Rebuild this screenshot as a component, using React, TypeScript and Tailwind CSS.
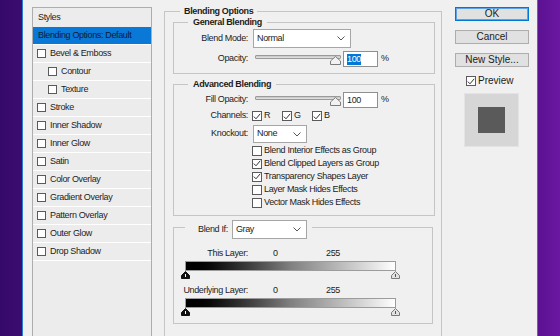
import type { ReactNode } from "react";

const styleItems = [
  { label: "Bevel & Emboss", sub: false },
  { label: "Contour", sub: true },
  { label: "Texture", sub: true },
  { label: "Stroke", sub: false },
  { label: "Inner Shadow", sub: false },
  { label: "Inner Glow", sub: false },
  { label: "Satin", sub: false },
  { label: "Color Overlay", sub: false },
  { label: "Gradient Overlay", sub: false },
  { label: "Pattern Overlay", sub: false },
  { label: "Outer Glow", sub: false },
  { label: "Drop Shadow", sub: false },
];

const advancedChecks = [
  { label: "Blend Interior Effects as Group", checked: false },
  { label: "Blend Clipped Layers as Group", checked: true },
  { label: "Transparency Shapes Layer", checked: true },
  { label: "Layer Mask Hides Effects", checked: false },
  { label: "Vector Mask Hides Effects", checked: false },
];

function CheckBox({ checked = false, size = "w-[10px] h-[10px]" }: { checked?: boolean; size?: string }) {
  return (
    <div className={`flex shrink-0 items-center justify-center border border-[#5a5a5a] bg-white ${size}`}>
      {checked && (
        <svg width="8" height="7" viewBox="0 0 8 7">
          <polyline points="0.8,3.6 3,5.8 7.2,0.8" fill="none" stroke="#333" strokeWidth="1" />
        </svg>
      )}
    </div>
  );
}

function Chevron() {
  return (
    <svg width="8" height="5" viewBox="0 0 8 5">
      <polyline points="0.5,0.5 4,4 7.5,0.5" fill="none" stroke="#555" strokeWidth="1" />
    </svg>
  );
}

function Select({ value, width, height = "h-[19px]" }: { value: string; width: string; height?: string }) {
  return (
    <div className={`flex items-center justify-between border border-[#a6a6a6] bg-white pl-[3px] pr-[5px] ${width} ${height}`}>
      <span>{value}</span>
      <Chevron />
    </div>
  );
}

function Slider() {
  return (
    <div className="relative ml-[2px] h-[16px] w-[86px]">
      <div className="mt-[4px] h-[4px] w-full rounded-[1px] border border-[#9a9a9a] bg-linear-to-b from-[#c4c4c4] to-[#e6e6e6]" />
      <svg className="absolute right-0 top-[5px]" width="11" height="9" viewBox="0 0 11 9">
        <path d="M5.5 0.5 L10.5 5 L10.5 8.5 L0.5 8.5 L0.5 5 Z" fill="#f2f2f2" stroke="#7c7c7c" />
      </svg>
    </div>
  );
}

function NumberField({ selected = false }: { selected?: boolean }) {
  return (
    <>
      <div className="ml-[2px] flex h-[16px] w-[35px] items-center border border-[#8f8f8f] bg-white pl-[3px]">
        <span className={selected ? "bg-[#0078d7] leading-[11px] text-white" : "leading-[11px]"}>100</span>
      </div>
      <span className="ml-[3px]">%</span>
    </>
  );
}

function Thumb({ dark }: { dark?: boolean }) {
  return (
    <svg width="9" height="8" viewBox="0 0 9 8">
      <path
        d="M4.5 0.5 L8.5 4.5 L8.5 7.5 L0.5 7.5 L0.5 4.5 Z"
        fill={dark ? "#111" : "#e2e2e2"}
        stroke={dark ? "#111" : "#7a7a7a"}
      />
      <line x1="4.5" y1="3" x2="4.5" y2="6" stroke={dark ? "#fff" : "#555"} />
    </svg>
  );
}

function Group({ title, className, children }: { title: string; className: string; children: ReactNode }) {
  return (
    <div className={`border border-[#c5c5c5] ${className}`}>
      <div className="-mb-[5px] -mt-[7px] ml-[14px] h-[12px] w-fit bg-[#f0f0f0] px-[5px] font-bold leading-[12px]">{title}</div>
      {children}
    </div>
  );
}

function LayerRange({ label }: { label: string }) {
  return (
    <>
      <div className="flex h-[12px] items-center leading-[12px]">
        <span className="w-[74px] text-right">{label}</span>
        <span className="ml-[25px] w-[53px]">0</span>
        <span>255</span>
      </div>
      <div className="ml-[11px] mt-[2px] h-[10px] w-[211px] border border-[#9c9c9c] bg-linear-to-r from-black via-[#808080] to-white" />
      <div className="ml-[7px] flex w-[219px] justify-between">
        <Thumb dark />
        <Thumb />
      </div>
    </>
  );
}

function Button({ label, primary = false }: { label: string; primary?: boolean }) {
  return (
    <div
      className={`flex h-[14px] w-[74px] items-center justify-center border bg-[#e1e1e1] text-[10px] leading-[12px] tracking-normal ${
        primary ? "border-[#0078d7] shadow-[inset_0_0_0_1px_#5ba3e6]" : "border-[#adadad]"
      }`}
    >
      {label}
    </div>
  );
}

export default function App() {
  return (
    <div className="flex h-[336px] w-[560px] overflow-hidden font-['Liberation_Sans',Arial,sans-serif] text-[9px] tracking-[-0.35px] text-[#1c1c1c]">
      <div className="w-[22px] bg-linear-to-r from-[#35096a] to-[#3c0d6e]" />
      <div className="w-px bg-[#2c7bd2]" />

      <div className="flex w-[514px] bg-[#f0f0f0] pl-[9px]">
        {/* styles list */}
        <div className="mt-[7px] h-[340px] w-[120px] shrink-0 border border-[#adadad] bg-[#ececec]">
          <div className="flex h-[19px] items-center pl-[5px]">Styles</div>
          <div className="flex h-[18px] items-center border-b border-white bg-[#0a78d7] pl-[5px] text-[#0d1b36]">
            Blending Options: Default
          </div>
          {styleItems.map((item) => (
            <div
              key={item.label}
              className={`flex h-[18px] items-center gap-[4px] border-b border-white ${item.sub ? "pl-[15px]" : "pl-[4px]"}`}
            >
              <CheckBox size="w-[9px] h-[9px]" />
              <span>{item.label}</span>
            </div>
          ))}
        </div>

        {/* blending options */}
        <div className="ml-[12px] mt-[11px] h-[340px] w-[278px] shrink-0 border border-[#c5c5c5] pl-[8px] pr-[6px]">
          <div className="-mb-[5px] -mt-[7px] ml-[7px] h-[12px] w-fit bg-[#f0f0f0] px-[4px] font-bold leading-[12px]">
            Blending Options
          </div>

          <Group title="General Blending" className="mt-[10px] pb-[6px]">
            <div className="mt-[6px] flex items-center">
              <span className="w-[74px] text-right">Blend Mode:</span>
              <div className="ml-[5px]">
                <Select value="Normal" width="w-[98px]" />
              </div>
            </div>
            <div className="mt-[3px] flex items-center">
              <span className="w-[74px] text-right">Opacity:</span>
              <div className="ml-[5px] flex items-center">
                <Slider />
                <NumberField selected />
              </div>
            </div>
          </Group>

          <Group title="Advanced Blending" className="mt-[10px] pb-[6px]">
            <div className="mt-[7px] flex items-center">
              <span className="w-[74px] text-right">Fill Opacity:</span>
              <div className="ml-[5px] flex items-center">
                <Slider />
                <NumberField />
              </div>
            </div>
            <div className="mt-[2px] flex h-[12px] items-center">
              <span className="w-[74px] text-right">Channels:</span>
              <div className="ml-[4px] flex items-center">
                {["R", "G", "B"].map((c) => (
                  <div key={c} className="flex w-[30px] items-center gap-[2px]">
                    <CheckBox checked />
                    <span>{c}</span>
                  </div>
                ))}
              </div>
            </div>
            <div className="mt-[3px] flex items-center">
              <span className="w-[74px] text-right">Knockout:</span>
              <div className="ml-[5px]">
                <Select value="None" width="w-[54px]" height="h-[18px]" />
              </div>
            </div>
            <div className="ml-[78px] mt-px flex flex-col">
              {advancedChecks.map((c) => (
                <div key={c.label} className="flex h-[13px] items-center gap-[2px]">
                  <CheckBox checked={c.checked} />
                  <span>{c.label}</span>
                </div>
              ))}
            </div>
          </Group>

          <div className="mr-[2px] mt-[11px] border border-[#c5c5c5] pb-[7px]">
            <div className="-mt-[8px] ml-[11px] flex h-[19px] w-fit items-center bg-[#f0f0f0] pl-[13px] pr-[5px]">
              <span>Blend If:</span>
              <div className="ml-[4px]">
                <Select value="Gray" width="w-[75px]" />
              </div>
            </div>
            <div className="mt-[8px]">
              <LayerRange label="This Layer:" />
            </div>
            <div className="mt-[5px]">
              <LayerRange label="Underlying Layer:" />
            </div>
          </div>
        </div>

        {/* buttons */}
        <div className="ml-[13px] mt-[7px] flex w-[74px] shrink-0 flex-col">
          <Button label="OK" primary />
          <div className="mt-[9px]">
            <Button label="Cancel" />
          </div>
          <div className="mt-[9px]">
            <Button label="New Style..." />
          </div>
          <div className="ml-[11px] mt-[8px] flex items-center gap-[2px] text-[10px] tracking-normal">
            <CheckBox checked />
            <span className="leading-[12px]">Preview</span>
          </div>
          <div className="ml-[9px] mt-[6px] flex h-[54px] w-[55px] items-center justify-center border border-[#e4e4e4] bg-[#d6d6d6]">
            <div className="h-[26px] w-[27px] bg-[#5a5a5a]" />
          </div>
        </div>
      </div>

      <div className="w-px bg-[#2c7bd2]" />
      <div className="flex-1 bg-linear-to-r from-[#5a1290] to-[#6c17a2]" />
    </div>
  );
}
